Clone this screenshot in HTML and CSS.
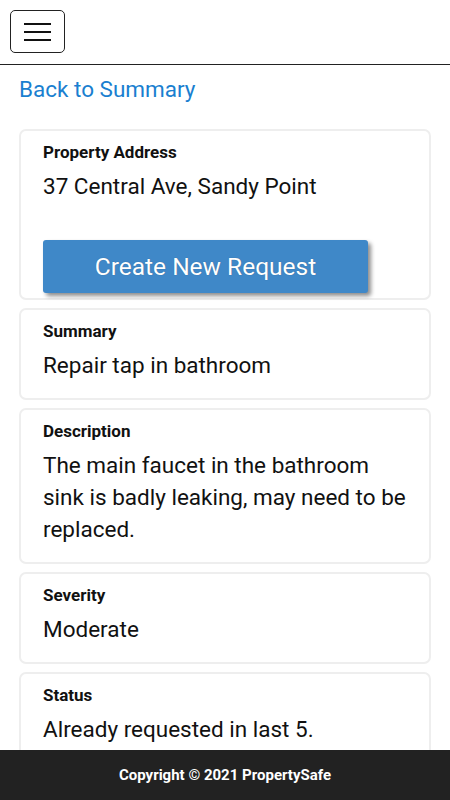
FILE: index.html
```html
<!DOCTYPE html>
<html lang="en">
<head>
  <meta charset="UTF-8">
  <meta name="viewport" content="width=device-width, initial-scale=1.0">
  <title>Request Details</title>
  <link rel="stylesheet" href="styles.css">
</head>
<body>
  <header class="topbar">
    <button class="menu-btn" aria-label="Menu">
      <span></span><span></span><span></span>
    </button>
  </header>

  <main class="content">
    <a class="back-link" href="#">Back to Summary</a>

    <div class="card">
      <div class="label">Property Address</div>
      <div class="value">37 Central Ave, Sandy Point</div>
      <button class="create-btn">Create New Request</button>
    </div>

    <div class="card">
      <div class="label">Summary</div>
      <div class="value">Repair tap in bathroom</div>
    </div>

    <div class="card">
      <div class="label">Description</div>
      <div class="value">The main faucet in the bathroom sink is badly leaking, may need to be replaced.</div>
    </div>

    <div class="card">
      <div class="label">Severity</div>
      <div class="value">Moderate</div>
    </div>

    <div class="card">
      <div class="label">Status</div>
      <div class="value">Already requested in last 5.</div>
    </div>
  </main>

  <footer class="footer">Copyright &copy; 2021 PropertySafe</footer>
</body>
</html>
```

FILE: styles.css
```css
body {
  margin: 0;
  font-family: Roboto, "Liberation Sans", sans-serif;
  color: #111;
  background: #fff;
  height: 800px;
  overflow: hidden;
}

.topbar {
  height: 65px;
  border-bottom: 1px solid #222;
  padding: 10px;
  box-sizing: border-box;
}

.menu-btn {
  width: 55px;
  height: 43px;
  border: 1px solid #222;
  border-radius: 5px;
  background: #fff;
  display: flex;
  flex-direction: column;
  justify-content: center;
  align-items: center;
  gap: 6px;
  padding: 0;
}

.menu-btn span {
  display: block;
  width: 27px;
  height: 2px;
  background: #111;
}

.content {
  padding: 10px 19px 0;
  display: flex;
  flex-direction: column;
  gap: 8px;
}

.back-link {
  color: #1a7fd0;
  text-decoration: none;
  font-size: 22.5px;
  line-height: 28px;
  margin-bottom: 18px;
  align-self: flex-start;
}

.card {
  border: 2px solid #eee;
  border-radius: 7px;
  padding: 11px 16px 17px 22px;
}

.label {
  font-weight: bold;
  font-size: 17px;
  line-height: 20px;
  color: #111;
}

.value {
  font-size: 22.5px;
  line-height: 32px;
  margin-top: 8px;
}

.create-btn {
  display: block;
  width: 325px;
  height: 53px;
  margin: 38px 0 -12px;
  background: #3f88c8;
  color: #fff;
  border: none;
  border-radius: 3px;
  font-family: inherit;
  font-size: 24.5px;
  box-shadow: 3px 3px 4px rgba(0, 0, 0, 0.45);
  text-shadow: 0 0 1px rgba(0, 0, 0, 0.3);
}

.footer {
  position: fixed;
  left: 0;
  right: 0;
  bottom: 0;
  height: 50px;
  background: #222;
  color: #fff;
  font-weight: bold;
  font-size: 15px;
  display: flex;
  align-items: center;
  justify-content: center;
}
```
